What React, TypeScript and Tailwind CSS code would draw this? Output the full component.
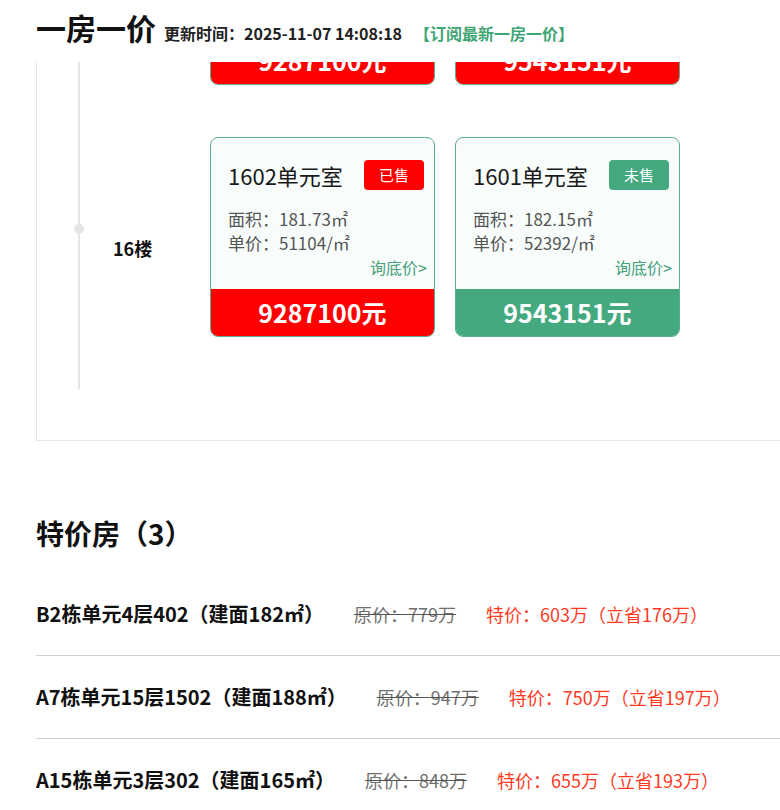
import React from "react";

type CardProps = { room: string; sold: boolean; area: string; unit: string; price: string };

function Card({ room, sold, area, unit, price }: CardProps) {
  return (
    <div className="w-[225px] h-[200px] shrink-0 rounded-lg border border-[#5aae8c] bg-[#f8fdfc] overflow-hidden flex flex-col">
      <div className="flex-1 pl-[17px] pr-[10px] pt-[22px]">
        <div className="flex items-center justify-between h-[30px]">
          <span className="text-[22px] leading-[30px] text-[#1a1a1a]">{room}</span>
          {sold ? (
            <span className="bg-[#ff0000] text-white text-[15px] rounded w-[60px] h-[30px] flex items-center justify-center">已售</span>
          ) : (
            <span className="bg-[#45a97f] text-white text-[15px] rounded w-[60px] h-[30px] flex items-center justify-center">未售</span>
          )}
        </div>
        <div className="mt-[17px] text-[17px] leading-[24px] text-[#555]">面积：{area}㎡</div>
        <div className="text-[17px] leading-[24px] text-[#555]">单价：{unit}/㎡</div>
        <div className="text-[16px] leading-[24px] text-[#45a07a] text-right -mr-[3px]">询底价&gt;</div>
      </div>
      {sold ? (
        <div className="h-[47px] bg-[#ff0000] text-white text-[25px] font-bold leading-[47px] text-center">{price}</div>
      ) : (
        <div className="h-[47px] bg-[#45a97f] text-white text-[25px] font-bold leading-[47px] text-center">{price}</div>
      )}
    </div>
  );
}

function Cards({ allSold }: { allSold?: boolean }) {
  return (
    <div className="flex gap-[20px]">
      <Card room="1602单元室" sold={true} area="181.73" unit="51104" price="9287100元" />
      <Card room="1601单元室" sold={!!allSold} area="182.15" unit="52392" price="9543151元" />
    </div>
  );
}

const specials = [
  { name: "B2栋单元4层402（建面182㎡）", orig: "779万", deal: "特价：603万（立省176万）" },
  { name: "A7栋单元15层1502（建面188㎡）", orig: "947万", deal: "特价：750万（立省197万）" },
  { name: "A15栋单元3层302（建面165㎡）", orig: "848万", deal: "特价：655万（立省193万）" },
];

export default function App() {
  return (
    <div className="w-[780px] h-[810px] overflow-hidden bg-white font-['Noto_Sans_CJK_SC',sans-serif] text-[#111]">
      <div className="h-[62px] pl-[36px] pt-[6px] flex items-baseline whitespace-nowrap">
        <span className="text-[30px] font-bold leading-[42px] text-[#111]">一房一价</span>
        <span className="ml-[8px] text-[16px] font-bold text-[#222]">更新时间：2025-11-07 14:08:18</span>
        <span className="ml-[12px] text-[16px] font-bold text-[#3fa574]">【订阅最新一房一价】</span>
      </div>

      <div className="ml-[36px] w-[1200px] border-l border-b border-[#e5e5e5] pb-[51px]">
        <div className="flex h-[75px] overflow-hidden">
          <div className="w-[76px] shrink-0 pl-[41px] flex">
            <div className="w-[2px] bg-[#e5e5e5]" />
          </div>
          <div className="w-[97px] shrink-0" />
          <div className="-mt-[177px]">
            <Cards allSold={true} />
          </div>
        </div>
        <div className="flex">
          <div className="w-[76px] shrink-0 pl-[41px] flex relative">
            <div className="w-[2px] bg-[#e5e5e5]" />
            <div className="absolute left-[37px] top-[87px] w-[10px] h-[10px] rounded-full bg-[#e5e5e5]" />
          </div>
          <div className="w-[97px] shrink-0 pt-[97px] text-[18px] font-bold leading-[28px] text-[#111]">16楼</div>
          <div className="pb-[52px]">
            <Cards />
          </div>
        </div>
      </div>

      <div className="mt-[72px] pl-[36px] text-[28px] font-bold leading-[40px] text-[#111]">特价房（3）</div>

      <div className="mt-[20px] ml-[36px]">
        {specials.map((s) => (
          <div key={s.name} className="h-[83px] border-b border-[#d0d0d0] flex items-center gap-[30px] whitespace-nowrap">
            <span className="text-[20px] font-bold text-[#111]">{s.name}</span>
            <span className="text-[18px] text-[#707070] line-through decoration-[#555]">原价：{s.orig}</span>
            <span className="text-[18px] text-[#ff3a1f]">{s.deal}</span>
          </div>
        ))}
      </div>
    </div>
  );
}
